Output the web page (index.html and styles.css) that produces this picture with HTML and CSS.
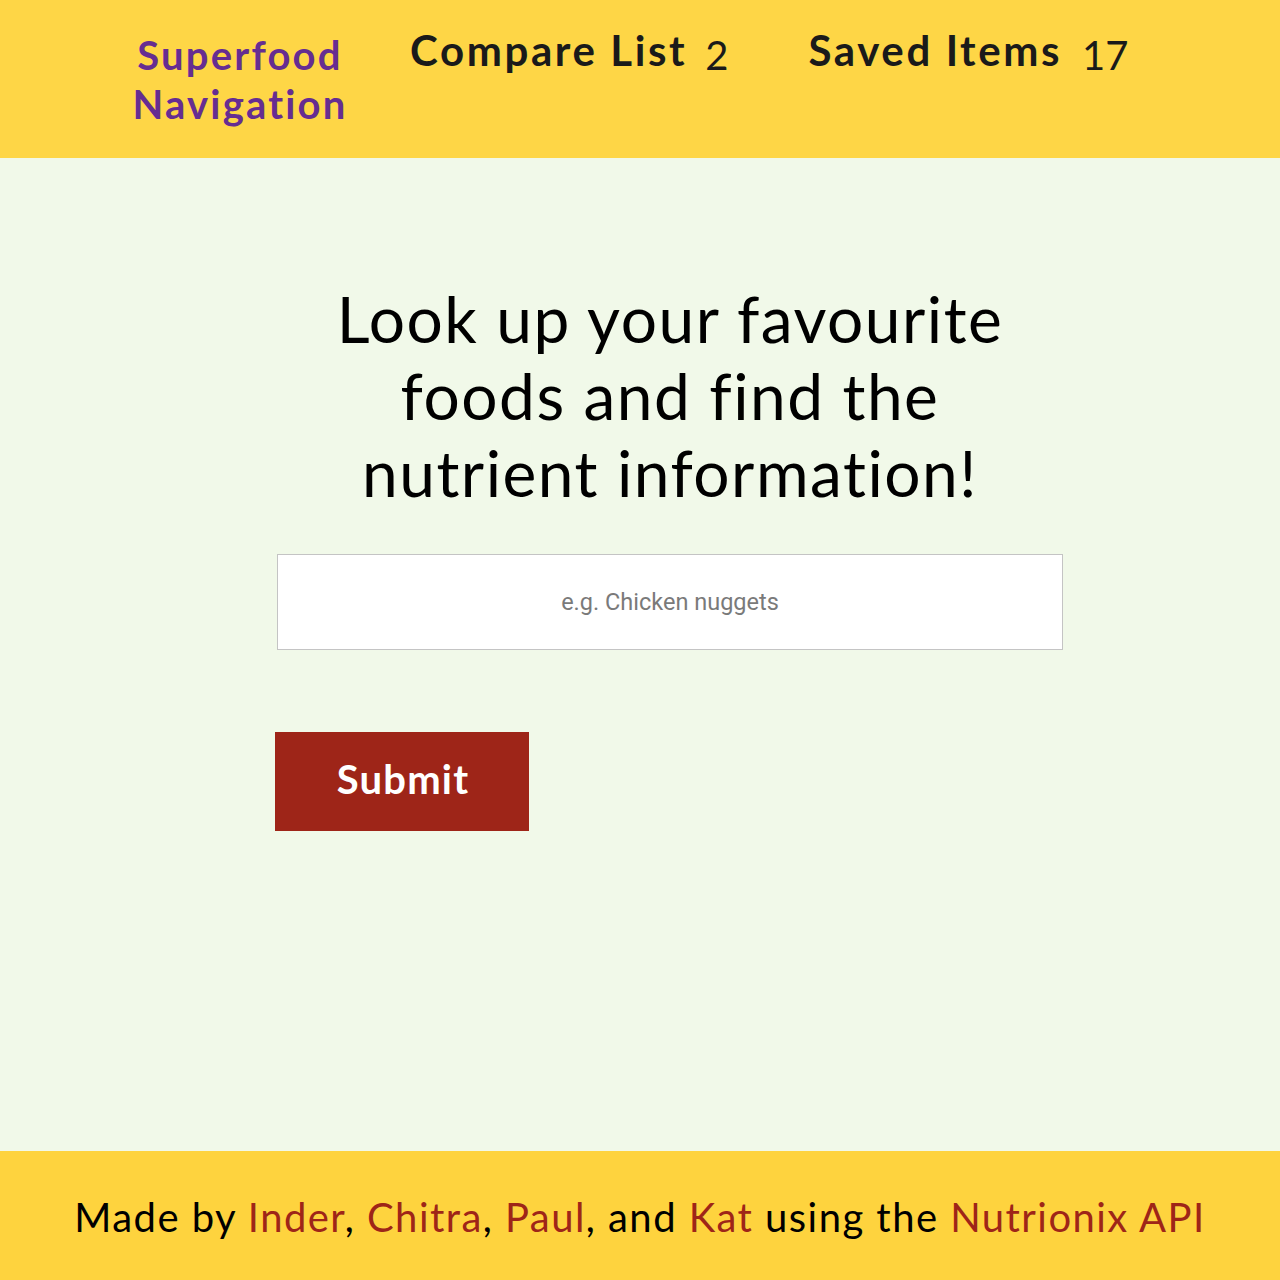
FILE: index.html
```html
<!DOCTYPE html>
<html lang="en">
<head>
<meta charset="utf-8">
<title>Superfood</title>
<link rel="stylesheet" href="styles.css">
</head>
<body>
<header class="site-header">
  <nav class="nav">
    <a class="brand" href="#">Superfood<br>Navigation</a>
    <a class="nav-link compare" href="#"><span class="label">Compare List</span><span class="count">2</span></a>
    <a class="nav-link saved" href="#"><span class="label">Saved Items</span><span class="count">17</span></a>
  </nav>
</header>
<main class="main">
  <section class="search">
    <h1 class="headline">Look up your favourite<br>foods and find the<br>nutrient information!</h1>
    <form class="search-form">
      <input class="search-input" type="text" placeholder="e.g. Chicken nuggets">
      <button class="submit" type="button">Submit</button>
    </form>
  </section>
</main>
<footer class="site-footer">
  <p class="credits">Made by <a href="#">Inder</a>, <a href="#">Chitra</a>, <a href="#">Paul</a>, and <a href="#">Kat</a> using the <a href="#">Nutrionix API</a></p>
</footer>
</body>
</html>
```
FILE: styles.css
```css
* { box-sizing: border-box; }
html, body { margin: 0; padding: 0; }
body {
  font-family: "Lato", "Liberation Sans", sans-serif;
  font-variant-ligatures: none;
  background: #f1f9e9;
  color: #000;
  display: flex;
  flex-direction: column;
  min-height: 1280px;
}
a { text-decoration: none; }

.site-header {
  background: #fed646;
  height: 158px;
}
.nav {
  display: flex;
  align-items: flex-start;
  padding: 31px 0 0 129px;
}
.brand {
  color: #662d91;
  font-weight: 700;
  font-size: 40px;
  line-height: 49px;
  text-align: center;
  width: 222px;
  letter-spacing: 2.2px;
}
.nav-link {
  display: flex;
  align-items: baseline;
  color: #1a1a1a;
  line-height: 48px;
  margin-top: -5px;
}
.label {
  font-weight: 700;
  font-size: 42px;
  letter-spacing: 2.6px;
}
.compare { margin-left: 59px; }
.saved { margin-left: 80px; }
.count {
  font-weight: 400;
  font-size: 40px;
  margin-left: 18px;
  position: relative;
  top: 4px;
}
.saved .count { margin-left: 20px; }

.main {
  flex: 1;
  display: flex;
  justify-content: center;
  padding-left: 60px;
}
.search {
  width: 786px;
  padding-top: 122px;
}
.headline {
  margin: 0;
  font-weight: 400;
  font-size: 64px;
  line-height: 77px;
  letter-spacing: 1.5px;
  text-align: center;
}
.search-form {
  display: flex;
  flex-direction: column;
  align-items: flex-start;
  margin-top: 43px;
}
.search-input {
  width: 786px;
  height: 96px;
  border: 1px solid #c4c4c4;
  background: #fff;
  font-family: "Roboto", "Liberation Sans", sans-serif;
  font-size: 23.5px;
  text-align: center;
  outline: none;
}
.search-input::placeholder { color: #7a7a7a; }
.submit {
  margin-top: 82px;
  margin-left: -2px;
  width: 254px;
  height: 99px;
  border: none;
  background: #9e2518;
  color: #fff;
  font-family: "Lato", sans-serif;
  font-weight: 700;
  font-size: 40px;
  letter-spacing: 1.2px;
  padding: 0 0 6px 2px;
  cursor: pointer;
}

.site-footer {
  background: #fed33e;
  height: 129px;
}
.credits {
  margin: 0;
  padding-top: 42px;
  text-align: center;
  font-size: 40px;
  line-height: 48px;
  letter-spacing: 1.45px;
}
.credits a { color: #9e2518; }
```
